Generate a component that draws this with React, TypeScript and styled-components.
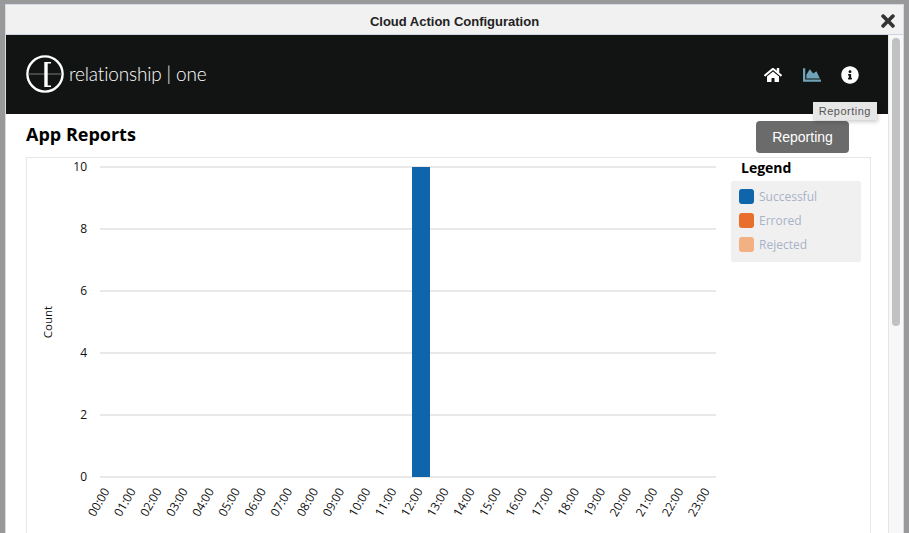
import React from "react";
import styled, { createGlobalStyle } from "styled-components";
import { FaHome, FaChartArea, FaInfoCircle, FaTimes } from "react-icons/fa";

const GlobalStyle = createGlobalStyle`
  html, body {
    margin: 0;
    height: 100%;
    overflow: hidden;
    background: #999;
  }
  #root {
    height: 100%;
  }
`;

const Backdrop = styled.div`
  height: 533px;
  padding: 4px 5px 0 5px;
  box-sizing: border-box;
`;

const Dialog = styled.div`
  position: relative;
  height: 529px;
  display: flex;
  flex-direction: column;
  background: #fff;
  border: 1px solid #d4dbe6;
  border-bottom: none;
  box-sizing: border-box;
`;

const TitleBar = styled.div`
  flex: none;
  height: 30px;
  padding-top: 4px;
  display: flex;
  align-items: center;
  justify-content: center;
  background: #f1f1f1;
  border-bottom: 1px solid #c9d3e2;
  box-sizing: border-box;
  font: bold 13px "Liberation Sans", Arial, sans-serif;
  color: #222;
`;

const CloseButton = styled.span`
  position: absolute;
  top: 6px;
  right: 5px;
  display: flex;
  color: #333;
  font-size: 20px;
`;

const Body = styled.div`
  flex: 1;
  min-height: 0;
  display: flex;
`;

const Content = styled.div`
  flex: 1;
  min-width: 0;
  display: flex;
  flex-direction: column;
`;

const ScrollTrack = styled.div`
  flex: none;
  width: 15px;
  padding: 3px 3px 0;
  box-sizing: border-box;
  background: #f7f7f7;
  border-left: 1px solid #e6e6e6;
`;

const ScrollThumb = styled.div`
  width: 8px;
  height: 288px;
  border-radius: 4px;
  background: #c1c1c1;
`;

const Header = styled.header`
  position: relative;
  flex: none;
  height: 79px;
  display: flex;
  align-items: center;
  justify-content: space-between;
  padding: 0 28px 0 20px;
  background: #121413;
`;

const Logo = styled.div`
  display: flex;
  align-items: center;
  gap: 5px;
  color: #fff;
  font: 300 19px Lato, "Liberation Sans", sans-serif;
  letter-spacing: -0.15px;
  margin-bottom: 2px;
`;

const Nav = styled.nav`
  display: flex;
  align-items: center;
  gap: 20px;
  margin-top: 1px;
`;

const NavIcon = styled.span<{ $active?: boolean }>`
  display: flex;
  width: 19px;
  justify-content: center;
  font-size: 18px;
  color: ${(p) => (p.$active ? "#6fa3b8" : "#fff")};

  &:last-child {
    margin: 0 1px 0 -1px;
  }
`;

const Tooltip = styled.div`
  position: absolute;
  top: 67px;
  right: 11px;
  padding: 0 6px 0 6px;
  height: 18px;
  background: #e6e6e6;
  color: #555;
  font: 11px/18px "Liberation Sans", Arial, sans-serif;
  letter-spacing: 0.5px;
  box-shadow: 1px 2px 4px rgba(0, 0, 0, 0.2);
  z-index: 2;
`;

const Main = styled.main`
  flex: 1;
  padding: 7px 17px 0 20px;
  min-height: 0;
`;

const TitleRow = styled.div`
  display: flex;
  align-items: flex-start;
  justify-content: space-between;
  height: 36px;
`;

const PageTitle = styled.h1`
  margin: 1px 0 0;
  font: bold 18px "Open Sans", sans-serif;
  line-height: 24px;
  color: #000;
`;

const ReportButton = styled.button`
  width: 93px;
  height: 32px;
  margin-right: 22px;
  border: none;
  border-radius: 4px;
  background: #6b6b6b;
  color: #fff;
  font: 14px "Liberation Sans", Arial, sans-serif;
`;

const ChartCard = styled.section`
  height: 400px;
  display: flex;
  border: 1px solid #e6e6e6;
  box-sizing: border-box;
`;

const ChartSvg = styled.svg`
  flex: none;
  display: block;
  text {
    font-family: "Open Sans", sans-serif;
    font-size: 12px;
    fill: #111;
  }
`;

const LegendColumn = styled.aside`
  margin-left: 14px;
  width: 130px;
`;

const LegendTitle = styled.h2`
  margin: 0 0 4px 10px;
  font: bold 14px/19px "Open Sans", sans-serif;
  color: #000;
`;

const LegendBox = styled.div`
  display: flex;
  flex-direction: column;
  gap: 9px;
  padding: 8px 8px 10px;
  border-radius: 2px;
  background: #f0f0f0;
`;

const LegendItem = styled.div`
  display: flex;
  align-items: center;
  gap: 5px;
  font: 12px/15px "Open Sans", sans-serif;
  color: #a9b2c8;
`;

const Swatch = styled.span<{ $color: string }>`
  width: 15px;
  height: 15px;
  border-radius: 3px;
  background: ${(p) => p.$color};
`;

const hours = Array.from({ length: 24 }, (_, i) => `${String(i).padStart(2, "0")}:00`);
const ticks = [10, 8, 6, 4, 2, 0];
const legend = [
  { label: "Successful", color: "#0e65ab" },
  { label: "Errored", color: "#e96e2b" },
  { label: "Rejected", color: "#f2b083" },
];

const PLOT_LEFT = 73;
const PLOT_TOP = 9;
const ROW = 62;
const SLOT = 26.09;

const Chart = () => (
  <ChartSvg width="690" height="380">
    {ticks.map((t, i) => (
      <g key={t}>
        <line x1={PLOT_LEFT} x2="689" y1={PLOT_TOP + i * ROW} y2={PLOT_TOP + i * ROW} stroke="#e8e8e8" strokeWidth="2" />
        <text x="60" y={PLOT_TOP + i * ROW + 4} textAnchor="end">
          {t}
        </text>
      </g>
    ))}
    <text transform="translate(25 164) rotate(-90)" textAnchor="middle" style={{ fontSize: 11.5 }}>
      Count
    </text>
    <rect x="385" y={PLOT_TOP} width="18" height={5 * ROW} fill="#0e65ab" />
    {hours.map((h, i) => (
      <text key={h} transform={`translate(${83 + i * SLOT} 333) rotate(-60)`} textAnchor="end">
        {h}
      </text>
    ))}
  </ChartSvg>
);

const LogoMark = () => (
  <svg width="38" height="38" viewBox="0 0 38 38" fill="none" stroke="#fff">
    <circle cx="19" cy="19" r="17.6" strokeWidth="2.4" />
    <line x1="2" x2="36" y1="19" y2="19" stroke="#777" strokeWidth="1" />
    <path d="M25 7.8h-5M25 31.2h-5" strokeWidth="1.6" />
    <path d="M20 7v25" strokeWidth="3.4" />
  </svg>
);

export default function App() {
  return (
    <>
      <GlobalStyle />
      <Backdrop>
        <Dialog>
          <TitleBar>Cloud Action Configuration</TitleBar>
          <CloseButton>
            <FaTimes />
          </CloseButton>
          <Body>
            <Content>
              <Header>
                <Logo>
                  <LogoMark />
                  <span>relationship | one</span>
                </Logo>
                <Nav>
                  <NavIcon>
                    <FaHome />
                  </NavIcon>
                  <NavIcon $active>
                    <FaChartArea />
                  </NavIcon>
                  <NavIcon>
                    <FaInfoCircle />
                  </NavIcon>
                </Nav>
                <Tooltip>Reporting</Tooltip>
              </Header>
              <Main>
                <TitleRow>
                  <PageTitle>App Reports</PageTitle>
                  <ReportButton>Reporting</ReportButton>
                </TitleRow>
                <ChartCard>
                  <Chart />
                  <LegendColumn>
                    <LegendTitle>Legend</LegendTitle>
                    <LegendBox>
                      {legend.map((item) => (
                        <LegendItem key={item.label}>
                          <Swatch $color={item.color} />
                          {item.label}
                        </LegendItem>
                      ))}
                    </LegendBox>
                  </LegendColumn>
                </ChartCard>
              </Main>
            </Content>
            <ScrollTrack>
              <ScrollThumb />
            </ScrollTrack>
          </Body>
        </Dialog>
      </Backdrop>
    </>
  );
}
